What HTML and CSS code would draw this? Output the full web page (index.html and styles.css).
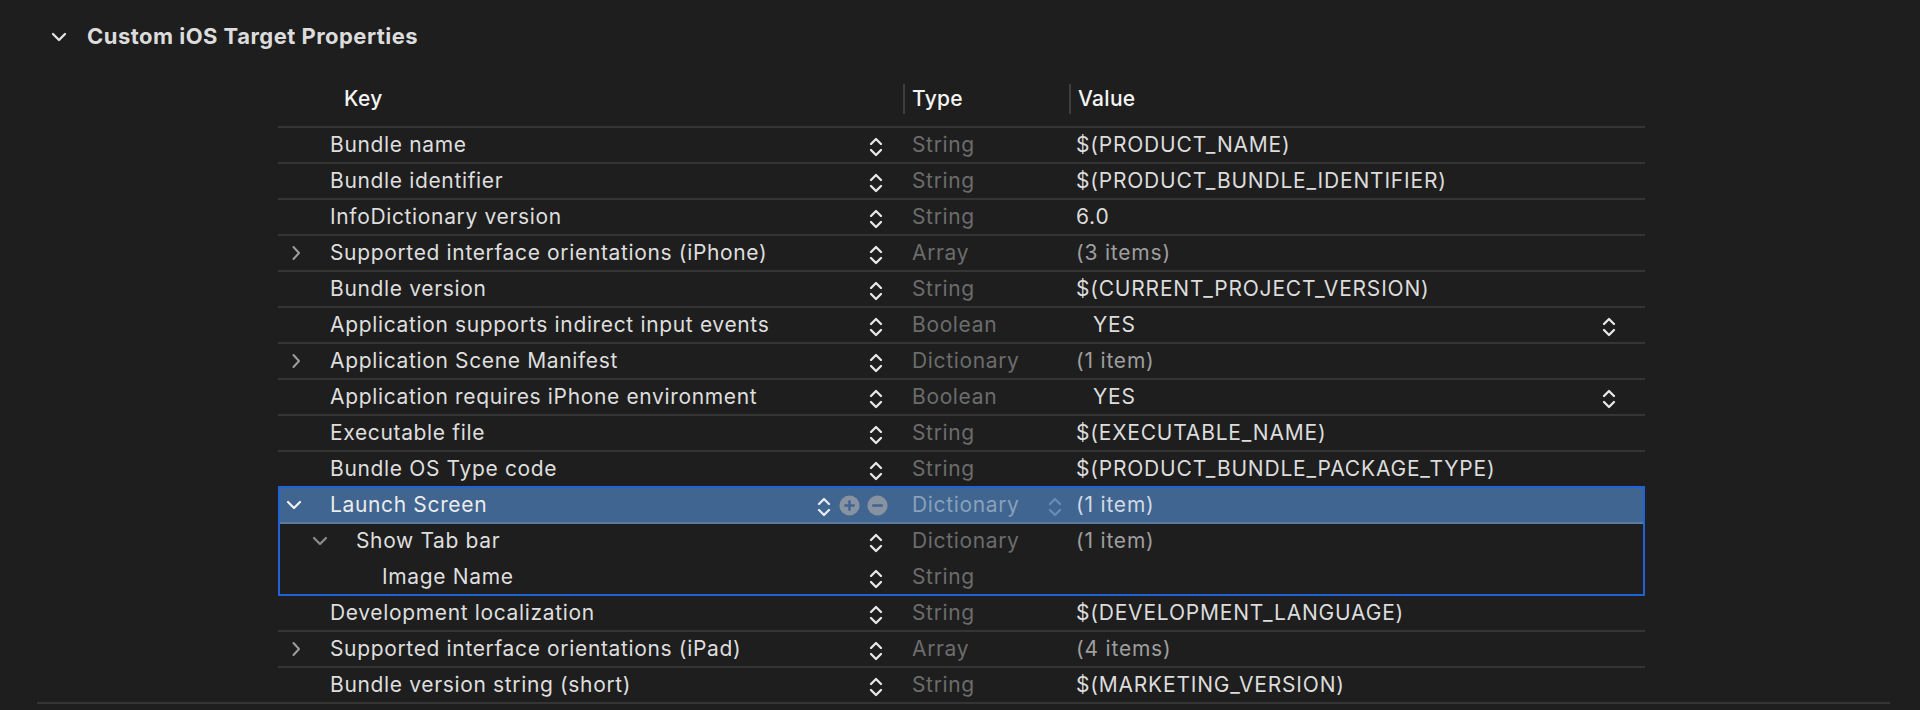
FILE: index.html
```html
<!DOCTYPE html>
<html>
<head>
<meta charset="utf-8">
<link rel="stylesheet" href="styles.css">
</head>
<body>
<svg width="0" height="0" class="defs">
  <defs>
    <symbol id="stepper" viewBox="0 0 14 22">
      <path d="M2 8 L7 3 L12 8 M2 14 L7 19 L12 14" fill="none" stroke="currentColor" stroke-width="2.3" stroke-linecap="round" stroke-linejoin="round"/>
    </symbol>
    <symbol id="chev-right" viewBox="0 0 10 16">
      <path d="M2.5 2 L8 8 L2.5 14" fill="none" stroke="currentColor" stroke-width="2" stroke-linecap="round" stroke-linejoin="round"/>
    </symbol>
    <symbol id="chev-down" viewBox="0 0 16 10">
      <path d="M2 2 L8 8 L14 2" fill="none" stroke="currentColor" stroke-width="2.3" stroke-linecap="round" stroke-linejoin="round"/>
    </symbol>
  </defs>
</svg>
<section class="section">
  <div class="title">
    <svg class="title-chev"><use href="#chev-down"/></svg>
    <span>Custom iOS Target Properties</span>
  </div>
  <div class="table">
    <div class="head">
      <div class="hcell hkey">Key</div>
      <div class="hcell hdiv">Type</div>
      <div class="hcell hdiv">Value</div>
    </div>

    <div class="row"><div class="key"><span class="disc"></span><span class="ktext">Bundle name</span><svg class="step"><use href="#stepper"/></svg></div><div class="type">String</div><div class="val">$(PRODUCT_NAME)</div></div>
    <div class="row"><div class="key"><span class="disc"></span><span class="ktext">Bundle identifier</span><svg class="step"><use href="#stepper"/></svg></div><div class="type">String</div><div class="val">$(PRODUCT_BUNDLE_IDENTIFIER)</div></div>
    <div class="row"><div class="key"><span class="disc"></span><span class="ktext">InfoDictionary version</span><svg class="step"><use href="#stepper"/></svg></div><div class="type">String</div><div class="val">6.0</div></div>
    <div class="row"><div class="key"><span class="disc"><svg class="chev-r"><use href="#chev-right"/></svg></span><span class="ktext">Supported interface orientations (iPhone)</span><svg class="step"><use href="#stepper"/></svg></div><div class="type">Array</div><div class="val dim">(3 items)</div></div>
    <div class="row"><div class="key"><span class="disc"></span><span class="ktext">Bundle version</span><svg class="step"><use href="#stepper"/></svg></div><div class="type">String</div><div class="val">$(CURRENT_PROJECT_VERSION)</div></div>
    <div class="row"><div class="key"><span class="disc"></span><span class="ktext">Application supports indirect input events</span><svg class="step"><use href="#stepper"/></svg></div><div class="type">Boolean</div><div class="val bool"><span>YES</span><svg class="step vstep"><use href="#stepper"/></svg></div></div>
    <div class="row"><div class="key"><span class="disc"><svg class="chev-r"><use href="#chev-right"/></svg></span><span class="ktext">Application Scene Manifest</span><svg class="step"><use href="#stepper"/></svg></div><div class="type">Dictionary</div><div class="val dim">(1 item)</div></div>
    <div class="row"><div class="key"><span class="disc"></span><span class="ktext">Application requires iPhone environment</span><svg class="step"><use href="#stepper"/></svg></div><div class="type">Boolean</div><div class="val bool"><span>YES</span><svg class="step vstep"><use href="#stepper"/></svg></div></div>
    <div class="row"><div class="key"><span class="disc"></span><span class="ktext">Executable file</span><svg class="step"><use href="#stepper"/></svg></div><div class="type">String</div><div class="val">$(EXECUTABLE_NAME)</div></div>
    <div class="row before-group"><div class="key"><span class="disc"></span><span class="ktext">Bundle OS Type code</span><svg class="step"><use href="#stepper"/></svg></div><div class="type">String</div><div class="val">$(PRODUCT_BUNDLE_PACKAGE_TYPE)</div></div>

    <div class="group">
      <div class="row selected">
        <div class="key"><span class="disc"><svg class="chev-d"><use href="#chev-down"/></svg></span><span class="ktext">Launch Screen</span>
          <svg class="step sel-step"><use href="#stepper"/></svg>
          <span class="circ"><svg viewBox="0 0 22 22"><circle cx="11" cy="11" r="10.5" fill="currentColor"/><path d="M11 5.5 V16.5 M5.5 11 H16.5" stroke="#3f6590" stroke-width="2.6"/></svg></span>
          <span class="circ last"><svg viewBox="0 0 22 22"><circle cx="11" cy="11" r="10.5" fill="currentColor"/><path d="M5.5 11 H16.5" stroke="#3f6590" stroke-width="2.6"/></svg></span>
        </div>
        <div class="type tstep"><span>Dictionary</span><svg class="step dstep"><use href="#stepper"/></svg></div>
        <div class="val selval">(1 item)</div>
      </div>
      <div class="row inner">
        <div class="key lvl1"><span class="disc"><svg class="chev-d gray"><use href="#chev-down"/></svg></span><span class="ktext">Show Tab bar</span><svg class="step"><use href="#stepper"/></svg></div>
        <div class="type">Dictionary</div><div class="val dim">(1 item)</div>
      </div>
      <div class="row inner lastin">
        <div class="key lvl2"><span class="disc"></span><span class="ktext">Image Name</span><svg class="step"><use href="#stepper"/></svg></div>
        <div class="type">String</div><div class="val"></div>
      </div>
    </div>

    <div class="row"><div class="key"><span class="disc"></span><span class="ktext">Development localization</span><svg class="step"><use href="#stepper"/></svg></div><div class="type">String</div><div class="val">$(DEVELOPMENT_LANGUAGE)</div></div>
    <div class="row"><div class="key"><span class="disc"><svg class="chev-r"><use href="#chev-right"/></svg></span><span class="ktext">Supported interface orientations (iPad)</span><svg class="step"><use href="#stepper"/></svg></div><div class="type">Array</div><div class="val dim">(4 items)</div></div>
    <div class="row lastrow"><div class="key"><span class="disc"></span><span class="ktext">Bundle version string (short)</span><svg class="step"><use href="#stepper"/></svg></div><div class="type">String</div><div class="val">$(MARKETING_VERSION)</div></div>
  </div>
  <div class="bottom-line"></div>
</section>
</body>
</html>
```

FILE: styles.css
```css
* { box-sizing: border-box; }
html, body {
  margin: 0;
  padding: 0;
  background: #1e1e1e;
  font-family: Inter, "Noto Sans", sans-serif;
  color: #dedede;
  overflow: hidden;
}
.defs { position: absolute; width: 0; height: 0; }

.section {
  margin-left: 37px;
  width: 1853px;
}
.title {
  height: 72px;
  display: flex;
  align-items: center;
  font-size: 22px;
  font-weight: 700;
  color: #dcdcdc;
  letter-spacing: 0.47px;
}
.title-chev {
  width: 16px;
  height: 10px;
  margin-left: 14px;
  margin-right: 20px;
  margin-top: 2px;
  color: #e4e4e4;
}

.table {
  margin-left: 241px;
  width: 1367px;
  font-size: 21px;
  letter-spacing: 0.65px;
}

.head {
  height: 56px;
  display: grid;
  grid-template-columns: 625px 166px 1fr;
  align-items: center;
  border-bottom: 2px solid #353535;
  color: #f4f4f4;
  font-weight: 500;
  letter-spacing: 0.3px;
}
.hcell { line-height: 30px; }
.hkey { padding-left: 66px; }
.hdiv {
  border-left: 2px solid #3e3e3e;
  padding-left: 7px;
}

.row {
  height: 36px;
  display: grid;
  grid-template-columns: 625px 166px 1fr;
  align-items: center;
  border-bottom: 2px solid #353535;
}
.row.before-group { border-bottom: none; height: 34px; }
.row.lastrow { border-bottom: none; height: 34px; }

.key {
  display: flex;
  align-items: center;
  height: 34px;
}
.disc {
  width: 52px;
  flex: none;
  display: flex;
  align-items: center;
  padding-left: 13px;
  height: 34px;
}
.lvl1 .disc { width: 78px; padding-left: 34px; }
.lvl2 .disc { width: 104px; }
.ktext {
  flex: 1;
  white-space: nowrap;
  color: #dedede;
  margin-top: -1px;
}
.chev-r { width: 10px; height: 16px; color: #9c9c9c; }
.chev-d { width: 16px; height: 10px; color: #f0f0f0; margin-left: -5px; }
.chev-d.gray { color: #8a8a8a; margin-left: 0; }

.step {
  width: 14px;
  height: 22px;
  flex: none;
  color: #e8e8e8;
  margin-right: 20px;
  margin-top: 4px;
}

.type {
  padding-left: 9px;
  color: #6c6c6c;
  white-space: nowrap;
  margin-top: -1px;
}
.val {
  padding-left: 7px;
  color: #dcdcdc;
  white-space: nowrap;
  margin-top: -1px;
  letter-spacing: 0.8px;
}
.val.dim { color: #9e9e9e; }
.val.bool {
  display: flex;
  align-items: center;
  padding-left: 24px;
  margin-top: 0;
}
.val.bool span { flex: 1; margin-top: -1px; }
.vstep { margin-right: 29px; }

.group {
  border: 2px solid #1f63d6;
  height: 110px;
}
.group .row { grid-template-columns: 623px 166px 1fr; }
.group .row.inner { border-bottom: 2px solid transparent; }
.group .row.lastin { border-bottom: none; height: 34px; }
.group .key .disc { width: 50px; padding-left: 11px; }
.group .key.lvl1 .disc { width: 76px; padding-left: 32px; }
.group .key.lvl2 .disc { width: 102px; }

.row.selected {
  background: #3f6590;
  border-bottom: 2px solid #5b7ba0;
}
.row.selected .ktext { color: #ececec; }
.sel-step { margin-right: 8px; color: #e6eaf0; }
.circ {
  width: 21px;
  height: 21px;
  flex: none;
  color: #8793a0;
  margin-right: 7px;
  display: flex;
}
.circ svg { width: 21px; height: 21px; }
.circ.last { margin-right: 15px; }
.tstep {
  display: flex;
  align-items: center;
  color: #8aa0bb;
  margin-top: 0;
}
.tstep span { flex: 1; margin-top: -1px; }
.dstep { margin-right: 7px; color: #6a8bb3; }
.selval { color: #d0d8e4; }

.bottom-line {
  height: 2px;
  background: #353535;
  width: 1853px;
}
```
